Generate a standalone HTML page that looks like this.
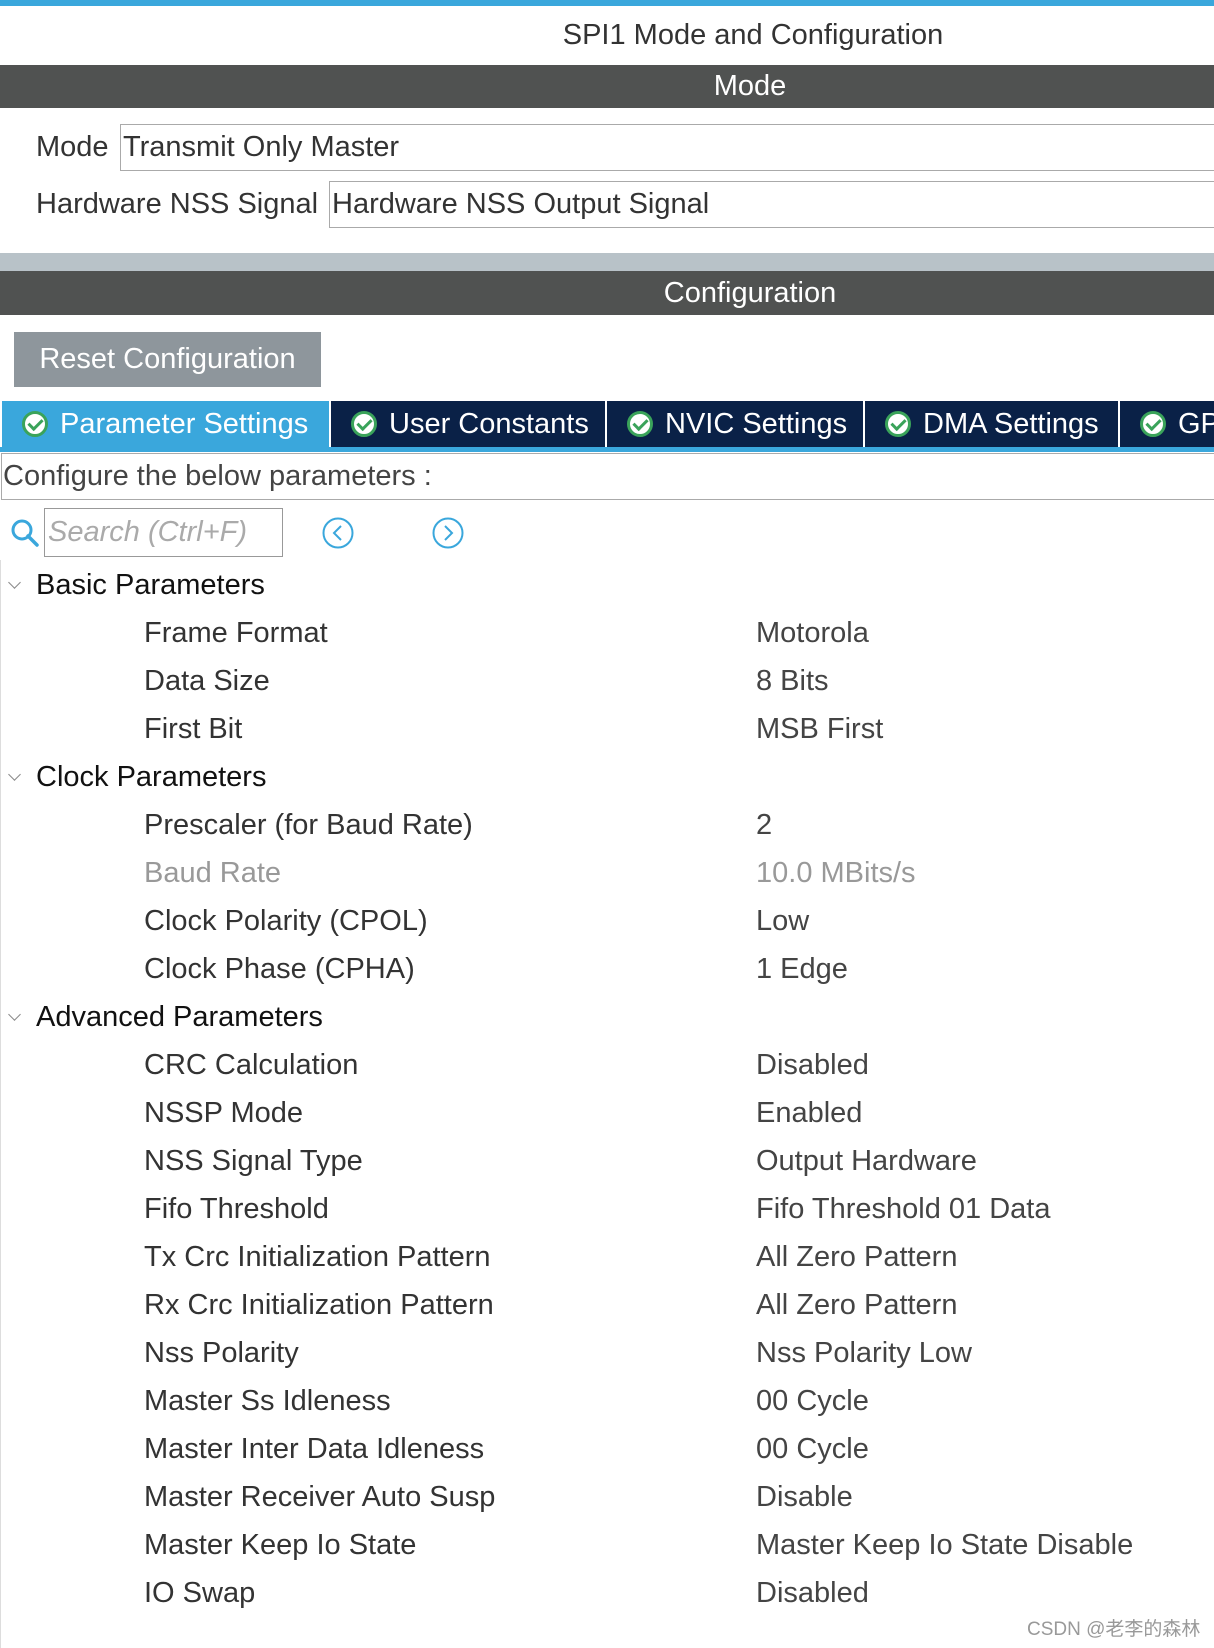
<!DOCTYPE html>
<html><head><meta charset="utf-8"><style>
body{margin:0;width:1214px;height:1648px;background:#fff;position:relative;overflow:hidden;font-family:"Liberation Sans",Arial,sans-serif;}
.a{position:absolute;white-space:nowrap;}
.bar{position:absolute;left:0;width:1500px;background:#505251;color:#fff;font-size:29px;text-align:center;}
.lab{position:absolute;font-size:29px;color:#333;line-height:40px;white-space:nowrap;}
.val{position:absolute;font-size:29px;color:#444;line-height:40px;white-space:nowrap;left:756px;}
.sec{position:absolute;font-size:29px;color:#111;line-height:40px;left:36px;white-space:nowrap;}
.chev{position:absolute;left:10px;width:8px;height:8px;border-right:1.5px solid #888;border-bottom:1.5px solid #888;transform:rotate(45deg);}
.tab{position:absolute;top:401px;height:46px;background:#0a2147;color:#fff;font-size:29px;line-height:46px;white-space:nowrap;overflow:hidden;}
.ck{display:inline-block;width:26px;height:26px;border-radius:50%;background:#fff;border:3px solid #3aa35a;box-sizing:border-box;vertical-align:-4px;margin-right:12px;position:relative;}
.ck:after{content:"";position:absolute;left:6px;top:2px;width:6px;height:11px;border-right:3px solid #3aa35a;border-bottom:3px solid #3aa35a;transform:rotate(45deg);}
</style></head><body>
<div class="a" style="left:0;top:0;width:1214px;height:6px;background:#3aa7dc"></div>
<div class="a" style="left:0;top:14px;width:1506px;text-align:center;font-size:29px;color:#333;line-height:42px">SPI1 Mode and Configuration</div>
<div class="bar" style="top:65px;height:43px;line-height:43px">Mode</div>
<div class="lab" style="left:36px;top:127px">Mode</div>
<div class="a" style="left:120px;top:124px;width:1100px;height:45px;border:1px solid #aaa;border-right:none"></div>
<div class="lab" style="left:123px;top:127px">Transmit Only Master</div>
<div class="lab" style="left:36px;top:184px">Hardware NSS Signal</div>
<div class="a" style="left:329px;top:181px;width:900px;height:45px;border:1px solid #aaa;border-right:none"></div>
<div class="lab" style="left:332px;top:184px">Hardware NSS Output Signal</div>
<div class="a" style="left:0;top:253px;width:1214px;height:18px;background:#b8c2c8"></div>
<div class="bar" style="top:271px;height:44px;line-height:44px">Configuration</div>
<div class="a" style="left:14px;top:332px;width:307px;height:55px;background:#8e969c;color:#fff;font-size:29px;line-height:55px;text-align:center">Reset Configuration</div>
<div class="tab" style="left:2px;width:327px;background:#3aa7dc;padding-left:20px;box-sizing:border-box"><span class="ck"></span>Parameter Settings</div>
<div class="tab" style="left:331px;width:274px;padding-left:20px;box-sizing:border-box"><span class="ck"></span>User Constants</div>
<div class="tab" style="left:607px;width:256px;padding-left:20px;box-sizing:border-box"><span class="ck"></span>NVIC Settings</div>
<div class="tab" style="left:865px;width:253px;padding-left:20px;box-sizing:border-box"><span class="ck"></span>DMA Settings</div>
<div class="tab" style="left:1120px;width:94px;padding-left:20px;box-sizing:border-box"><span class="ck"></span>GPIO</div>
<div class="a" style="left:0;top:447px;width:1214px;height:5px;background:#3aa7dc"></div>
<div class="a" style="left:1px;top:453px;width:1220px;height:45px;border:1px solid #aaa"></div>
<div class="lab" style="left:3px;top:456px;color:#444">Configure the below parameters :</div>
<svg class="a" style="left:10px;top:518px" width="30" height="30" viewBox="0 0 30 30"><circle cx="12" cy="12" r="9" fill="none" stroke="#3aa7dc" stroke-width="3"/><path d="M18 18 L27 27" stroke="#3aa7dc" stroke-width="3.5" stroke-linecap="round"/></svg>
<div class="a" style="left:44px;top:508px;width:237px;height:47px;border:1px solid #999"></div>
<div class="lab" style="left:48px;top:512px;color:#aaa;font-style:italic">Search (Ctrl+F)</div>
<svg class="a" style="left:321px;top:516px" width="34" height="34" viewBox="0 0 34 34"><circle cx="17" cy="17" r="14.5" fill="none" stroke="#3aa7dc" stroke-width="2"/><path d="M20 10 L13 17 L20 24" fill="none" stroke="#3aa7dc" stroke-width="2"/></svg>
<svg class="a" style="left:431px;top:516px" width="34" height="34" viewBox="0 0 34 34"><circle cx="17" cy="17" r="14.5" fill="none" stroke="#3aa7dc" stroke-width="2"/><path d="M14 10 L21 17 L14 24" fill="none" stroke="#3aa7dc" stroke-width="2"/></svg>
<div class="a" style="left:0;top:560px;width:1px;height:1088px;background:#ddd"></div>

<div class="chev" style="top:578px"></div><div class="sec" style="top:565px">Basic Parameters</div>
<div class="lab" style="left:144px;top:613px">Frame Format</div><div class="val" style="top:613px">Motorola</div>
<div class="lab" style="left:144px;top:661px">Data Size</div><div class="val" style="top:661px">8 Bits</div>
<div class="lab" style="left:144px;top:709px">First Bit</div><div class="val" style="top:709px">MSB First</div>
<div class="chev" style="top:770px"></div><div class="sec" style="top:757px">Clock Parameters</div>
<div class="lab" style="left:144px;top:805px">Prescaler (for Baud Rate)</div><div class="val" style="top:805px">2</div>
<div class="lab" style="left:144px;top:853px;color:#999">Baud Rate</div><div class="val" style="top:853px;color:#999">10.0 MBits/s</div>
<div class="lab" style="left:144px;top:901px">Clock Polarity (CPOL)</div><div class="val" style="top:901px">Low</div>
<div class="lab" style="left:144px;top:949px">Clock Phase (CPHA)</div><div class="val" style="top:949px">1 Edge</div>
<div class="chev" style="top:1010px"></div><div class="sec" style="top:997px">Advanced Parameters</div>
<div class="lab" style="left:144px;top:1045px">CRC Calculation</div><div class="val" style="top:1045px">Disabled</div>
<div class="lab" style="left:144px;top:1093px">NSSP Mode</div><div class="val" style="top:1093px">Enabled</div>
<div class="lab" style="left:144px;top:1141px">NSS Signal Type</div><div class="val" style="top:1141px">Output Hardware</div>
<div class="lab" style="left:144px;top:1189px">Fifo Threshold</div><div class="val" style="top:1189px">Fifo Threshold 01 Data</div>
<div class="lab" style="left:144px;top:1237px">Tx Crc Initialization Pattern</div><div class="val" style="top:1237px">All Zero Pattern</div>
<div class="lab" style="left:144px;top:1285px">Rx Crc Initialization Pattern</div><div class="val" style="top:1285px">All Zero Pattern</div>
<div class="lab" style="left:144px;top:1333px">Nss Polarity</div><div class="val" style="top:1333px">Nss Polarity Low</div>
<div class="lab" style="left:144px;top:1381px">Master Ss Idleness</div><div class="val" style="top:1381px">00 Cycle</div>
<div class="lab" style="left:144px;top:1429px">Master Inter Data Idleness</div><div class="val" style="top:1429px">00 Cycle</div>
<div class="lab" style="left:144px;top:1477px">Master Receiver Auto Susp</div><div class="val" style="top:1477px">Disable</div>
<div class="lab" style="left:144px;top:1525px">Master Keep Io State</div><div class="val" style="top:1525px">Master Keep Io State Disable</div>
<div class="lab" style="left:144px;top:1573px">IO Swap</div><div class="val" style="top:1573px">Disabled</div>
<div class="a" style="left:1027px;top:1617px;font-size:19px;color:#999;font-family:'Liberation Sans','Noto Sans CJK SC',sans-serif;line-height:26px">CSDN @老李的森林</div>
</body></html>
